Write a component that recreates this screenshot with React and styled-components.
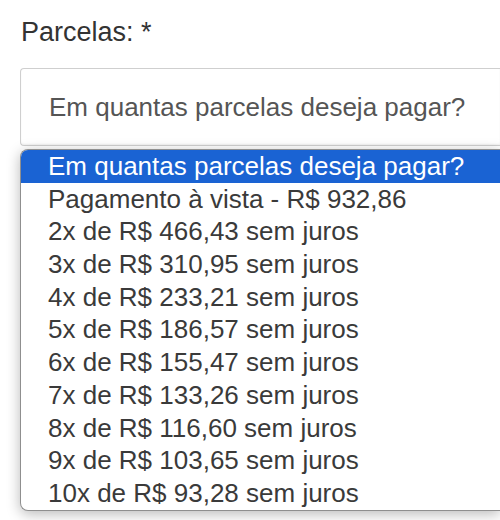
import React from "react";
import styled, { createGlobalStyle } from "styled-components";

const Global = createGlobalStyle`
  html, body {
    margin: 0;
    padding: 0;
    background: #fff;
    overflow: hidden;
  }
  body {
    font-family: "Liberation Sans", Arial, sans-serif;
  }
`;

const Page = styled.div`
  width: 500px;
  height: 520px;
  padding: 17px 0 0 20px;
  box-sizing: border-box;
`;

const Label = styled.div`
  font-size: 27px;
  color: #333;
  line-height: normal;
  padding-left: 1px;
`;

const Field = styled.div`
  position: relative;
  margin-top: 20px;
`;

const Select = styled.div`
  box-sizing: border-box;
  width: 480px;
  height: 78px;
  border: 1px solid #cfcfcf;
  border-right: 0;
  border-radius: 4px 0 0 4px;
  display: flex;
  align-items: center;
  padding-left: 28px;
  font-size: 26px;
  color: #555;
  background: #fff;
  box-shadow: inset 0 -1px 2px rgba(0, 0, 0, 0.06);
`;

const Popup = styled.ul`
  position: absolute;
  top: 81px;
  left: 0;
  box-sizing: border-box;
  width: 480px;
  margin: 0;
  padding: 0;
  list-style: none;
  background: #fff;
  border: 1px solid #8f8f8f;
  border-right: 0;
  border-radius: 8px 0 0 8px;
  overflow: hidden;
  box-shadow: 0 3px 14px rgba(0, 0, 0, 0.28);
`;

const Option = styled.li`
  height: 32.7px;
  line-height: 32.7px;
  padding-left: 27px;
  font-size: 26px;
  white-space: nowrap;
  color: ${(p) => (p.$active ? "#fff" : "#3a3a3a")};
  background: ${(p) => (p.$active ? "#1a63d3" : "transparent")};
`;

const options = [
  "Em quantas parcelas deseja pagar?",
  "Pagamento à vista - R$ 932,86",
  "2x de R$ 466,43 sem juros",
  "3x de R$ 310,95 sem juros",
  "4x de R$ 233,21 sem juros",
  "5x de R$ 186,57 sem juros",
  "6x de R$ 155,47 sem juros",
  "7x de R$ 133,26 sem juros",
  "8x de R$ 116,60 sem juros",
  "9x de R$ 103,65 sem juros",
  "10x de R$ 93,28 sem juros",
];

export default function App() {
  return (
    <>
      <Global />
      <Page>
        <Label>Parcelas: *</Label>
        <Field>
          <Select>Em quantas parcelas deseja pagar?</Select>
          <Popup>
            {options.map((o, i) => (
              <Option key={o} $active={i === 0}>
                {o}
              </Option>
            ))}
          </Popup>
        </Field>
      </Page>
    </>
  );
}
